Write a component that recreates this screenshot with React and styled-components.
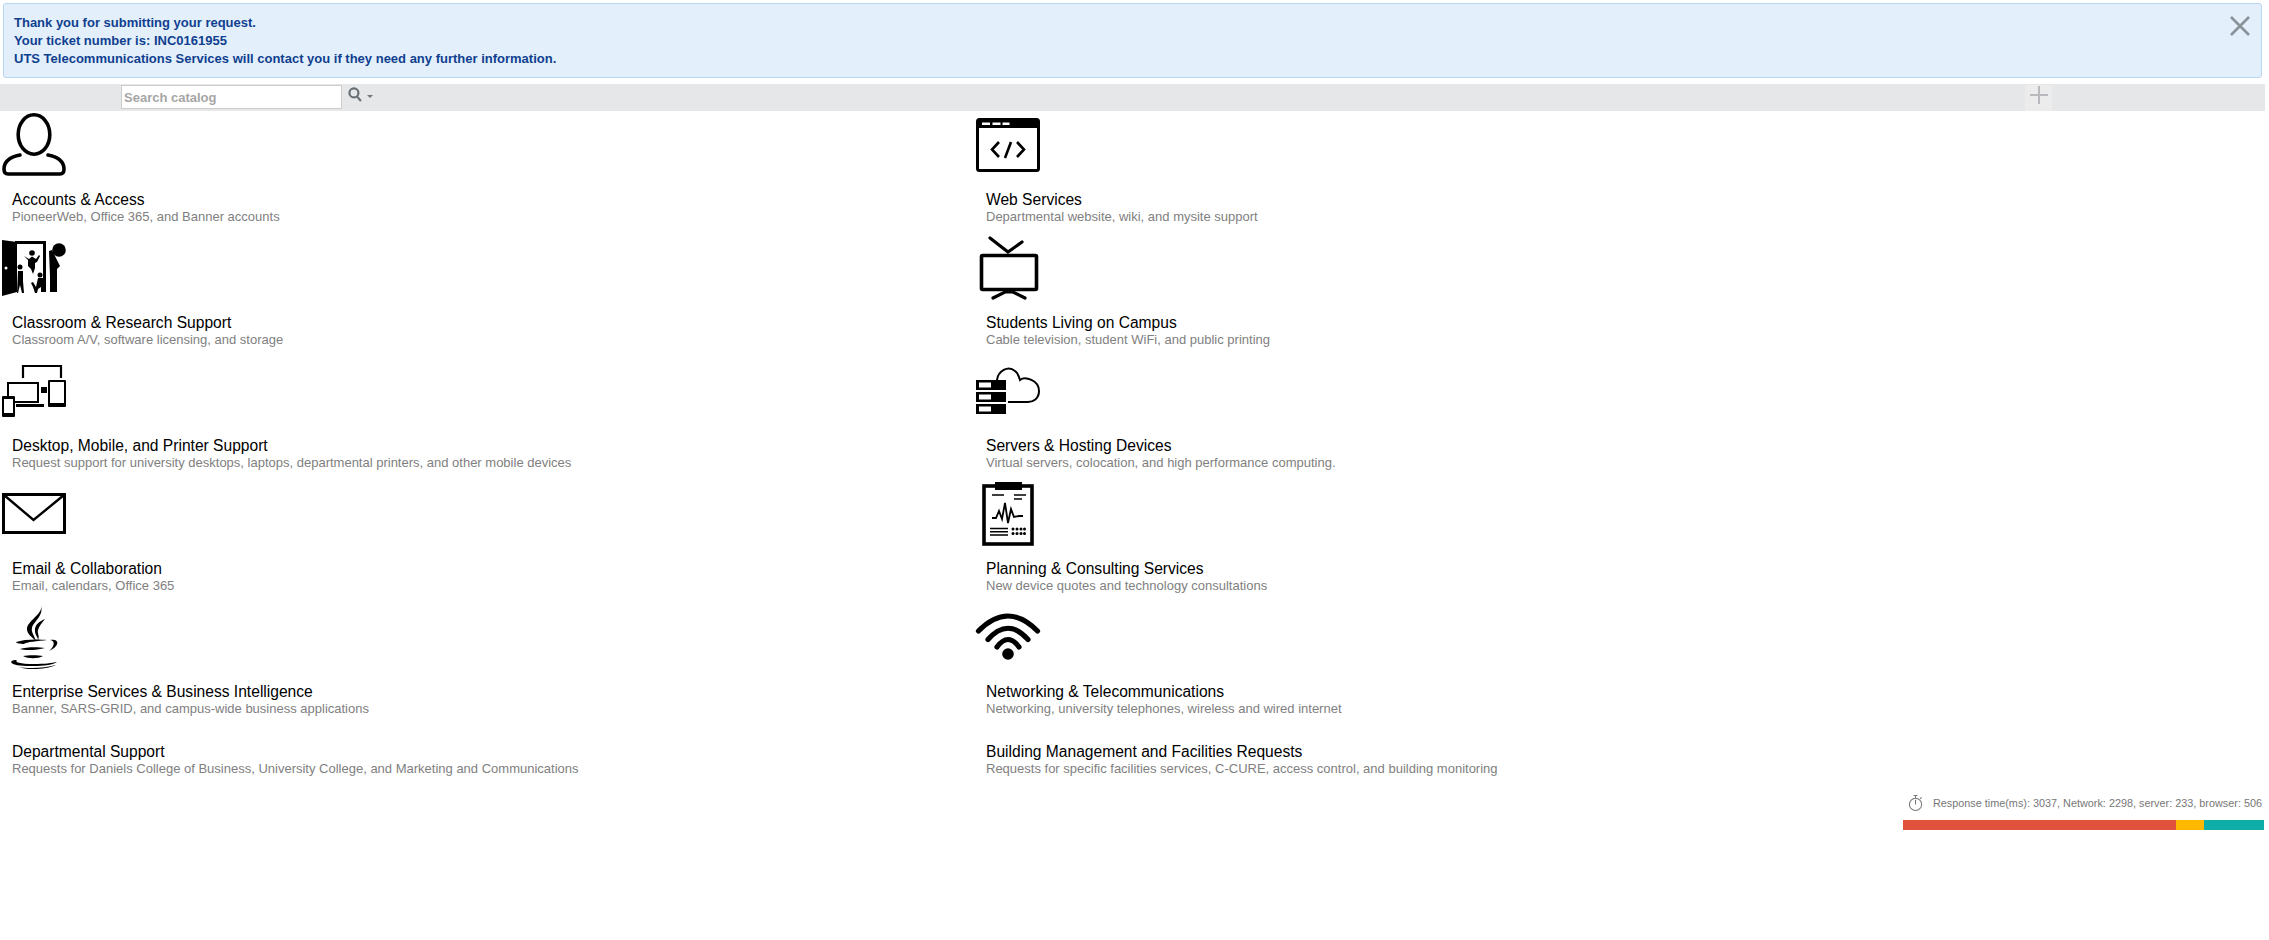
import styled, { createGlobalStyle } from 'styled-components'

const GlobalStyle = createGlobalStyle`
    html, body { margin: 0; padding: 0; background: #fff; }
    body { font-family: "Liberation Sans", Arial, sans-serif; }
`

const Page = styled.div`
    width: 2269px;
    height: 940px;
    overflow: hidden;
`

const Alert = styled.div`
    box-sizing: border-box;
    height: 75px;
    margin: 3px 7px 6px 3px;
    padding: 10px 8px 8px 10px;
    display: flex;
    justify-content: space-between;
    background: #e4effc;
    border: 1px solid #b9d6f2;
    border-radius: 3px;
`
const AlertText = styled.div`
    color: #0f3f8f;
    font-size: 13px;
    font-weight: bold;
    line-height: 18px;
`
const CloseButton = styled.button`
    width: 20px;
    height: 20px;
    margin: 2px 3px 0 0;
    padding: 0;
    border: 0;
    background: none;
    color: #8a9299;
    display: flex;
`

const Toolbar = styled.div`
    box-sizing: border-box;
    height: 27px;
    margin-right: 4px;
    padding-left: 121px;
    display: flex;
    align-items: flex-start;
    background: #e6e7e8;
`
const SearchInput = styled.input`
    box-sizing: border-box;
    width: 221px;
    height: 24px;
    margin-top: 1px;
    padding: 0 2px;
    border: 1px solid #ccc;
    background: #fff;
    font-family: inherit;
    font-size: 13px;
    font-weight: bold;
    &::placeholder { color: #a6a6a6; opacity: 1; }
`
const SearchMenu = styled.div`
    display: flex;
    align-items: center;
    gap: 5px;
    margin: 3px 0 0 6px;
    color: #666d73;
`
const Caret = styled.span`
    width: 0;
    height: 0;
    margin-top: 3px;
    border-left: 3px solid transparent;
    border-right: 3px solid transparent;
    border-top: 3px solid #777;
`
const AddButton = styled.div`
    box-sizing: border-box;
    width: 27px;
    height: 26px;
    margin: 1px 213px 0 auto;
    padding-bottom: 6px;
    display: flex;
    align-items: center;
    justify-content: center;
    background: #ececec;
    border-radius: 2px;
    color: #b7b9bc;
`

const Catalog = styled.div`
    display: grid;
    grid-template-columns: 974px 1fr;
    margin-top: 1px;
`
const Category = styled.div`
    display: flex;
    flex-direction: column;
`
const IconSlot = styled.div`
    height: 79px;
    svg { display: block; overflow: visible; }
`
const TextBlock = styled.div`
    height: 44px;
    padding-left: 12px;
    box-sizing: border-box;
    ${({ $plain }) => $plain && 'height: 60px; padding-top: 16px;'}
`
const Title = styled.div`
    color: #000;
    font-size: 15.6px;
    line-height: 17px;
`
const Description = styled.div`
    color: #808080;
    font-size: 13px;
    line-height: 16px;
    margin-top: 1px;
`

const Footer = styled.div`
    width: 361px;
    margin: 6px 5px 0 auto;
`
const Timing = styled.div`
    display: flex;
    align-items: center;
    justify-content: flex-end;
    gap: 9px;
    height: 20px;
    padding-right: 2px;
    color: #777;
    font-size: 10.850px;
    white-space: nowrap;
`
const Bar = styled.div`
    display: flex;
    height: 10px;
    margin-top: 7px;
`
const Segment = styled.div`
    background: ${({ $color }) => $color};
`

const Icon = ({ children }) => (
    <svg width="72" height="66" viewBox="0 0 72 66">{children}</svg>
)

const PersonIcon = () => (
    <Icon>
        <g fill="none" stroke="#000" strokeWidth="3.6">
            <ellipse cx="34" cy="22.5" rx="15.800" ry="19.7" />
            <path d="M20 43C10 45 4 50 4 57Q4 62 8 62H60Q64 62 64 57C64 50 58 45 48 43" strokeLinecap="round" />
        </g>
    </Icon>
)

const ClassroomIcon = () => (
    <Icon>
        <path d="M2 5L17 7V57L2 61Z" />
        <circle cx="6" cy="33" r="1.5" fill="#fff" />
        <path d="M15 6H46V57H43V9H15Z" />
        <circle cx="59" cy="15" r="6.8" />
        <path d="M49 16L52 15L60 31L57 34V57H50V41Z" />
        <circle cx="32" cy="18" r="2.8" />
        <path d="M24 21L29 24L32 21.500L36 24L39 20L40 21L37 27L35 28V33L33 39L31 34L28 31V25Z" />
        <circle cx="20" cy="32" r="2.500" />
        <path d="M18 36H23V46L24 58H22L20 50L18 58H17Z" />
        <circle cx="40" cy="40" r="2.500" />
        <path d="M31 48L33 47L36 52L38 43L43 43V57H41V52L38 54L37 58H35L33 52Z" />
    </Icon>
)

const DevicesIcon = () => (
    <Icon>
        <path d="M23 20V8H61V20" fill="none" stroke="#000" strokeWidth="2.200" />
        <rect x="8" y="25" width="30" height="19" fill="none" stroke="#000" strokeWidth="2" />
        <rect x="16" y="46" width="28" height="3" />
        <rect x="41" y="29" width="6" height="6" />
        <rect x="48" y="22" width="18" height="27" rx="1" />
        <rect x="50" y="24" width="14" height="21" fill="#fff" />
        <rect x="2" y="38" width="13" height="21" rx="1" />
        <rect x="4" y="41" width="9" height="14" fill="#fff" />
    </Icon>
)

const MailIcon = () => (
    <Icon>
        <rect x="3.500" y="13.500" width="61" height="38" fill="none" stroke="#000" strokeWidth="3" />
        <path d="M4 14L33.500 39L64 14" fill="none" stroke="#000" strokeWidth="2.400" />
    </Icon>
)

const JavaIcon = () => (
    <Icon>
        <path d="M41 2C43 10 27 17 27 25C27 30 32 33 36 37C34 31 31 28 32 24C33 18 44 12 41 2Z" />
        <path d="M45 15C40 17 34 21 35 27C35 31 38 33 38 36C40 32 37 29 38 26C39 22 42 19 45 15Z" />
        <path d="M16 38C24 35 38 35 47 36C38 37 26 38 24 40C20 40 16 39 16 38Z" />
        <path d="M20 45C26 43 38 43 45 44C38 46 26 47 20 45Z" />
        <path d="M23 52C28 51 38 51 43 52C38 55 28 55 23 52Z" />
        <path d="M11 58C12 56 15 56 17 56C14 58 20 60 34 60C44 60 52 59 57 58C52 62 38 62 30 62C20 62 12 61 11 58Z" />
        <path d="M18 63C28 64.500 44 64.500 56 61C46 66 26 66 18 63Z" />
        <path d="M50 36C60 34 60 42 49 47C54 43 56 37 50 36Z" />
    </Icon>
)

const WebIcon = () => (
    <Icon>
        <rect x="3.500" y="7.500" width="61" height="51" rx="2" fill="none" stroke="#000" strokeWidth="3" />
        <rect x="3" y="7" width="62" height="9" />
        <g fill="#fff">
            <rect x="8" y="10.500" width="8" height="2.500" />
            <rect x="18.500" y="10.500" width="8" height="2.500" />
            <rect x="28.500" y="10.500" width="7" height="2.500" />
        </g>
        <path d="M25 30L18 37.500L25 45M43 30L50 37.500L43 45M37 30L31 46" fill="none" stroke="#000" strokeWidth="2.600" />
    </Icon>
)

const TvIcon = () => (
    <Icon>
        <g fill="none" stroke="#000" strokeLinecap="round">
            <rect x="7.500" y="20.500" width="55" height="34" rx="1" strokeWidth="3.600" />
            <path d="M16 3L34 17L48 7M19 63L31 57H39L51 63" strokeWidth="3.200" />
        </g>
    </Icon>
)

const ServerIcon = () => (
    <Icon>
        <rect x="2" y="22" width="30" height="10" />
        <rect x="2" y="34" width="30" height="10" />
        <rect x="2" y="46" width="30" height="10" />
        <g fill="#fff">
            <rect x="5" y="24.500" width="12" height="5" />
            <rect x="5" y="36.500" width="12" height="5" />
            <rect x="5" y="48.500" width="12" height="5" />
        </g>
        <path d="M23 22C24 13 34 7 41 13C44 15 45 19 46 22C51 18 65 22 65 33C65 41 59 44 54 44H34" fill="none" stroke="#000" strokeWidth="2" />
    </Icon>
)

const ClipboardIcon = () => (
    <Icon>
        <rect x="10" y="5" width="48" height="58" fill="none" stroke="#000" strokeWidth="3.600" />
        <rect x="21" y="1" width="27" height="8" />
        <path d="M18 14H30M40 14H52M40 18H48M16 47.500H34M16 50.800H34M16 54H34" stroke="#000" strokeWidth="1.400" fill="none" />
        <path d="M18 37H22L25 30L28 38L31 22L34 42L37 28L40 36L45 35H49" stroke="#000" strokeWidth="1.800" fill="none" />
        <g>
            <circle cx="39" cy="48" r="1.500" /><circle cx="43" cy="48" r="1.500" /><circle cx="47" cy="48" r="1.500" /><circle cx="50.500" cy="48" r="1.500" />
            <circle cx="39" cy="52.500" r="1.500" /><circle cx="43" cy="52.500" r="1.500" /><circle cx="47" cy="52.500" r="1.500" /><circle cx="50.500" cy="52.500" r="1.500" />
        </g>
    </Icon>
)

const WifiIcon = () => (
    <Icon>
        <g fill="none" stroke="#000" strokeWidth="5.200" strokeLinecap="round">
            <path d="M4.500 27Q34 -3 63.500 27" />
            <path d="M14 35.500Q34 13 54 35.500" />
            <path d="M23 43Q34 28 45 43" />
        </g>
        <circle cx="34" cy="50" r="5.800" />
    </Icon>
)

const StopwatchIcon = () => (
    <svg width="16" height="18" viewBox="0 0 17 18" fill="none" stroke="#777" strokeWidth="1.100">
        <circle cx="8" cy="10.500" r="6.500" />
        <path d="M8 4V1M6 1H10M8 10.500V5.500M13 4.500L14.500 3" />
    </svg>
)

const categories = [
    { title: 'Accounts & Access', text: 'PioneerWeb, Office 365, and Banner accounts', icon: <PersonIcon /> },
    { title: 'Web Services', text: 'Departmental website, wiki, and mysite support', icon: <WebIcon /> },
    { title: 'Classroom & Research Support', text: 'Classroom A/V, software licensing, and storage', icon: <ClassroomIcon /> },
    { title: 'Students Living on Campus', text: 'Cable television, student WiFi, and public printing', icon: <TvIcon /> },
    { title: 'Desktop, Mobile, and Printer Support', text: 'Request support for university desktops, laptops, departmental printers, and other mobile devices', icon: <DevicesIcon /> },
    { title: 'Servers & Hosting Devices', text: 'Virtual servers, colocation, and high performance computing.', icon: <ServerIcon /> },
    { title: 'Email & Collaboration', text: 'Email, calendars, Office 365', icon: <MailIcon /> },
    { title: 'Planning & Consulting Services', text: 'New device quotes and technology consultations', icon: <ClipboardIcon /> },
    { title: 'Enterprise Services & Business Intelligence', text: 'Banner, SARS-GRID, and campus-wide business applications', icon: <JavaIcon /> },
    { title: 'Networking & Telecommunications', text: 'Networking, university telephones, wireless and wired internet', icon: <WifiIcon /> },
    { title: 'Departmental Support', text: 'Requests for Daniels College of Business, University College, and Marketing and Communications' },
    { title: 'Building Management and Facilities Requests', text: 'Requests for specific facilities services, C-CURE, access control, and building monitoring' },
]

const timings = [
    { value: 2298, color: '#e1523d' },
    { value: 233, color: '#ffb800' },
    { value: 506, color: '#0fada8' },
]

const App = () => {
    const total = timings.reduce((sum, t) => sum + t.value, 0)
    return (
        <Page>
            <GlobalStyle />
            <Alert>
                <AlertText>
                    Thank you for submitting your request.<br />
                    Your ticket number is: INC0161955<br />
                    UTS Telecommunications Services will contact you if they need any further information.
                </AlertText>
                <CloseButton aria-label="Close">
                    <svg width="20" height="20" viewBox="0 0 20 20" stroke="currentColor" strokeWidth="2.600">
                        <path d="M1 1L19 19M19 1L1 19" />
                    </svg>
                </CloseButton>
            </Alert>
            <Toolbar>
                <SearchInput placeholder="Search catalog" />
                <SearchMenu>
                    <svg width="14" height="15" viewBox="0 0 13 14" fill="none" stroke="currentColor" strokeWidth="2">
                        <circle cx="5.500" cy="5.500" r="4.200" />
                        <path d="M8.500 9L12 13" />
                    </svg>
                    <Caret />
                </SearchMenu>
                <AddButton>
                    <svg width="18" height="18" viewBox="0 0 18 18" stroke="currentColor" strokeWidth="2">
                        <path d="M9 0V18M0 9H18" />
                    </svg>
                </AddButton>
            </Toolbar>
            <Catalog>
                {categories.map(({ title, text, icon }) => (
                    <Category key={title}>
                        {icon && <IconSlot>{icon}</IconSlot>}
                        <TextBlock $plain={!icon}>
                            <Title>{title}</Title>
                            <Description>{text}</Description>
                        </TextBlock>
                    </Category>
                ))}
            </Catalog>
            <Footer>
                <Timing>
                    <StopwatchIcon />
                    Response time(ms): 3037, Network: 2298, server: 233, browser: 506
                </Timing>
                <Bar>
                    {timings.map((t) => (
                        <Segment key={t.color} $color={t.color} style={{ width: `${(t.value / total) * 100}%` }} />
                    ))}
                </Bar>
            </Footer>
        </Page>
    )
}

export default App
